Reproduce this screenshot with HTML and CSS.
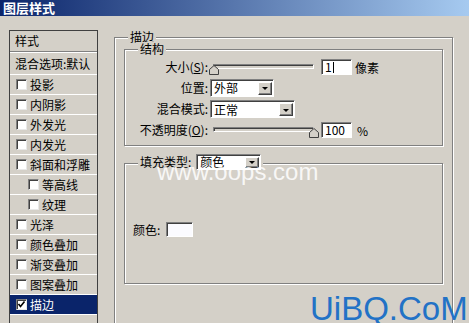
FILE: index.html
```html
<!DOCTYPE html>
<html lang="zh">
<head>
<meta charset="utf-8">
<title>图层样式</title>
<link rel="stylesheet" href="styles.css">
</head>
<body>
<div class="dlg">
  <div class="title">图层样式</div>
  <div class="content">
    <div class="list">
      <div class="item head">样式</div>
      <div class="item blend">混合选项:默认</div>
      <div class="item"><span class="cb"></span>投影</div>
      <div class="item"><span class="cb"></span>内阴影</div>
      <div class="item"><span class="cb"></span>外发光</div>
      <div class="item"><span class="cb"></span>内发光</div>
      <div class="item"><span class="cb"></span>斜面和浮雕</div>
      <div class="item sub"><span class="cb"></span>等高线</div>
      <div class="item sub"><span class="cb"></span>纹理</div>
      <div class="item"><span class="cb"></span>光泽</div>
      <div class="item"><span class="cb"></span>颜色叠加</div>
      <div class="item"><span class="cb"></span>渐变叠加</div>
      <div class="item"><span class="cb"></span>图案叠加</div>
      <div class="item selected"><span class="cb"><svg width="9" height="9" viewBox="0 0 9 9"><path d="M1.5 4 L3.5 6.5 L7.5 1.5" fill="none" stroke="#000" stroke-width="1.6"/></svg></span>描边</div>
      <div class="item rest"></div>
    </div>
    <div class="main">
      <div class="group outer">
        <span class="legend">描边</span>
        <div class="group struct">
          <span class="legend">结构</span>
          <div class="form">
            <span class="lbl">大小(<u>S</u>):</span>
            <div class="ctl">
              <div class="slider">
                <div class="track"></div>
                <svg class="thumb thumb-min" width="10" height="10" viewBox="0 0 10 10"><polygon points="0.5,9.5 0.5,4.5 5,0.5 9.5,4.5 9.5,9.5" fill="#d4d0c8" stroke="#404040"/></svg>
              </div>
              <div class="num">1<span class="caret"></span></div>
              <span class="unit">像素</span>
            </div>
            <span class="lbl">位置:</span>
            <div class="ctl">
              <div class="combo pos"><span>外部</span><span class="arrow"></span></div>
            </div>
            <span class="lbl">混合模式:</span>
            <div class="ctl">
              <div class="combo mode"><span>正常</span><span class="arrow"></span></div>
            </div>
            <span class="lbl">不透明度(<u>O</u>):</span>
            <div class="ctl">
              <div class="slider">
                <div class="track"></div>
                <svg class="thumb thumb-max" width="10" height="10" viewBox="0 0 10 10"><polygon points="0.5,9.5 0.5,4.5 5,0.5 9.5,4.5 9.5,9.5" fill="#d4d0c8" stroke="#404040"/></svg>
              </div>
              <div class="num">100</div>
              <span class="unit pct">%</span>
            </div>
          </div>
        </div>
        <div class="group fill">
          <div class="legend fill-legend">
            <span>填充类型:</span>
            <div class="combo kind"><span>颜色</span><span class="arrow"></span></div>
          </div>
          <div class="color-row">
            <span>颜色:</span>
            <span class="swatch"></span>
          </div>
        </div>
      </div>
    </div>
  </div>
  <div class="wm wm1">www.oops.com</div>
  <div class="wm wm2">UiBQ.CoM</div>
</div>
</body>
</html>
```
FILE: styles.css
```css
body {
  margin: 0;
  background: #d4d0c8;
  font-family: "Noto Sans CJK SC", "Noto Sans", sans-serif;
  font-size: 12px;
  color: #000;
}
.dlg {
  width: 469px;
  height: 323px;
  overflow: hidden;
  position: relative;
  background: #d4d0c8;
}
.title {
  height: 16px;
  line-height: 16px;
  padding-left: 3px;
  color: #fff;
  font-weight: bold;
  font-size: 13px;
  background: linear-gradient(to right, #0a246a, #a6caf0);
}
.content {
  display: flex;
  align-items: flex-start;
  padding: 14px 0 0 9px;
}
.list {
  width: 89px;
  height: 320px;
  box-sizing: border-box;
  border: 1px solid #404040;
  flex: none;
}
.item {
  height: 19px;
  border-bottom: 1px solid #fff;
  display: flex;
  align-items: center;
  padding-left: 6px;
  line-height: 14px;
  white-space: nowrap;
}
.head {
  height: 20px;
  padding-left: 5px;
  border-bottom: 1px solid #808080;
}
.blend {
  height: 21px;
  padding-left: 5px;
  border-top: 1px solid #fff;
}
.sub { padding-left: 18px; }
.selected {
  background: #0a246a;
  color: #fff;
}
.rest { border-bottom: none; }
.cb {
  width: 11px;
  height: 11px;
  box-sizing: border-box;
  background: #fff;
  border: 1px solid;
  border-color: #808080 #e8e8e8 #e8e8e8 #808080;
  box-shadow: inset 1px 1px #404040;
  margin-right: 3px;
  flex: none;
  display: flex;
  align-items: center;
  justify-content: center;
}
.cb svg { display: block; }

.main {
  margin: 7px 0 0 16px;
}
.group {
  position: relative;
  border: 1px solid #808080;
  box-shadow: inset 1px 1px #fff, 1px 1px #fff;
  box-sizing: border-box;
}
.outer {
  width: 339px;
  height: 330px;
  padding: 11px 0 0 9px;
}
.struct {
  width: 319px;
  height: 97px;
}
.fill {
  width: 319px;
  height: 121px;
  margin-top: 17px;
}
.legend {
  position: absolute;
  top: -8px;
  left: 13px;
  padding: 0 2px;
  background: #d4d0c8;
  line-height: 14px;
  white-space: nowrap;
}
.form {
  display: grid;
  grid-template-columns: 83px auto;
  grid-template-rows: 20px 21px 22px 20px;
  column-gap: 2px;
  padding-top: 7px;
  align-items: center;
}
.lbl {
  justify-self: end;
  line-height: 14px;
  white-space: nowrap;
}
.ctl {
  display: flex;
  align-items: center;
}
.slider {
  position: relative;
  width: 104px;
  height: 14px;
  flex: none;
}
.track {
  position: absolute;
  left: 3px;
  right: 0;
  top: 4px;
  height: 5px;
  box-sizing: border-box;
  border: 1px solid;
  border-color: #808080 #fff #fff #808080;
  box-shadow: inset 1px 1px #404040;
}
.thumb {
  position: absolute;
  top: 5px;
  display: block;
}
.thumb-min { left: -1px; }
.thumb-max { left: 99px; }
.num {
  width: 31px;
  height: 16px;
  box-sizing: border-box;
  border: 1px solid;
  border-color: #808080 #fff #fff #808080;
  box-shadow: inset 1px 1px #404040;
  background: #fff;
  margin-left: 7px;
  padding-left: 3px;
  line-height: 14px;
  display: flex;
  align-items: center;
  flex: none;
}
.caret {
  width: 1px;
  height: 11px;
  background: #000;
  margin-left: 1px;
}
.unit { margin-left: 3px; }
.pct { margin-left: 5px; }
.combo {
  height: 18px;
  box-sizing: border-box;
  border: 1px solid;
  border-color: #808080 #fff #fff #808080;
  box-shadow: inset 1px 1px #404040;
  background: #fff;
  display: flex;
  align-items: center;
  justify-content: space-between;
  padding: 2px 1px 1px 3px;
  line-height: 14px;
}
.pos { width: 64px; }
.mode { width: 85px; }
.kind {
  width: 65px;
  height: 16px;
  padding-top: 1px;
}
.arrow {
  width: 14px;
  height: 13px;
  box-sizing: border-box;
  background: #d4d0c8;
  border: 1px solid;
  border-color: #fff #404040 #404040 #fff;
  box-shadow: inset -1px -1px #808080;
  display: flex;
  align-items: center;
  justify-content: center;
}
.kind .arrow { height: 11px; }
.arrow::after {
  content: "";
  border-left: 3px solid transparent;
  border-right: 3px solid transparent;
  border-top: 3px solid #000;
  margin-top: 1px;
}
.fill-legend {
  top: -10px;
  display: flex;
  align-items: center;
  gap: 5px;
}
.color-row {
  display: flex;
  align-items: center;
  gap: 6px;
  margin: 58px 0 0 8px;
  line-height: 14px;
}
.swatch {
  width: 27px;
  height: 15px;
  box-sizing: border-box;
  border: 1px solid;
  border-color: #808080 #fff #fff #808080;
  box-shadow: inset 1px 1px #404040;
  background: #fbfbff;
}
.wm {
  position: absolute;
  font-family: "Liberation Sans", Arial, sans-serif;
  white-space: nowrap;
}
.wm1 {
  left: 157px;
  top: 160px;
  font-size: 24px;
  line-height: 24px;
  color: rgba(255, 255, 255, 0.85);
}
.wm2 {
  left: 310px;
  top: 292px;
  font-size: 33px;
  line-height: 33px;
  color: #2272c6;
}
```
